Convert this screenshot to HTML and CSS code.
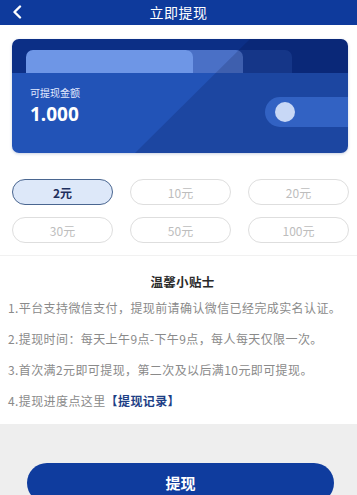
FILE: index.html
```html
<!DOCTYPE html>
<html lang="zh">
<head>
<meta charset="utf-8">
<link rel="stylesheet" href="styles.css">
</head>
<body>
<header class="topbar">
  <svg class="back" viewBox="0 0 12 14" width="12" height="14"><path d="M9 1.5 L3.5 7 L9 12.5" fill="none" stroke="#fff" stroke-width="2.4" stroke-linecap="round" stroke-linejoin="round"/></svg>
  <h1 class="title">立即提现</h1>
</header>

<section class="card">
  <div class="strip">
    <div class="tab tab-light"></div>
    <div class="tab tab-mid"></div>
    <div class="tab tab-dark"></div>
  </div>
  <div class="main">
    <div class="balance">
      <div class="label">可提现金额</div>
      <div class="amount">1.000</div>
    </div>
    <div class="toggle"><span class="knob"></span></div>
  </div>
</section>

<div class="options">
  <div class="opt opt-on">2元</div>
  <div class="opt">10元</div>
  <div class="opt">20元</div>
  <div class="opt">30元</div>
  <div class="opt">50元</div>
  <div class="opt">100元</div>
</div>

<section class="tips">
  <h2 class="tips-title">温馨小贴士</h2>
  <p class="tip">1.平台支持微信支付，提现前请确认微信已经完成实名认证。</p>
  <p class="tip">2.提现时间：每天上午9点-下午9点，每人每天仅限一次。</p>
  <p class="tip">3.首次满2元即可提现，第二次及以后满10元即可提现。</p>
  <p class="tip">4.提现进度点这里<span class="link">【提现记录】</span></p>
</section>

<footer class="bottom">
  <button class="submit">提现</button>
</footer>
</body>
</html>
```
FILE: styles.css
```css
* { box-sizing: border-box; }
html, body { margin: 0; padding: 0; }
body {
  width: 357px;
  height: 495px;
  overflow: hidden;
  background: #fff;
  font-family: "Noto Sans CJK SC", "Noto Sans", sans-serif;
}
.topbar {
  height: 25px;
  background: #0e3a9c;
  display: flex;
  align-items: center;
  justify-content: center;
  position: relative;
}
.back {
  position: absolute;
  left: 11px;
  top: 5px;
}
.title {
  margin: 0;
  font-size: 14px;
  font-weight: 400;
  color: #fff;
  line-height: 25px;
  letter-spacing: 0.5px;
}

.card {
  position: relative;
  margin: 14px 9px 0 12px;
  height: 114px;
  border-radius: 7px;
  overflow: hidden;
  box-shadow: 0 1px 3px rgba(40, 70, 140, 0.25);
}
.card::after {
  content: "";
  position: absolute;
  inset: 0;
  background: rgba(0, 8, 50, 0.16);
  clip-path: polygon(238px 0, 100% 0, 100% 100%, 123px 100%);
  z-index: 1;
  pointer-events: none;
}
.strip {
  position: relative;
  z-index: 0;
  height: 34px;
  background: #0c2f86;
  display: flex;
  align-items: flex-end;
  padding-left: 14px;
}
.tab {
  height: 23px;
  border-radius: 7px 7px 0 0;
  position: relative;
}
.tab-light { width: 167px; background: #6e96e6; z-index: 0; }
.tab-mid { width: 60px; margin-left: -10px; background: #4a70c6; z-index: -1; }
.tab-dark { width: 60px; margin-left: -11px; background: #1a4099; z-index: -2; }

.main {
  height: 80px;
  background: #2253b7;
  display: flex;
  justify-content: space-between;
  align-items: flex-start;
  padding: 13px 0 0 18px;
}
.balance { position: relative; z-index: 2; }
.label {
  font-size: 10px;
  line-height: 14px;
  color: #e2eaff;
  margin-bottom: 2px;
}
.amount {
  font-family: "Noto Sans", "Open Sans", sans-serif;
  font-size: 19px;
  font-weight: 700;
  line-height: 24px;
  color: #fff;
}
.toggle {
  margin-top: 11px;
  width: 83px;
  height: 30px;
  border-radius: 15px 0 0 15px;
  background: #3262c3;
  display: flex;
  align-items: center;
  padding-left: 10px;
  position: relative;
  z-index: 2;
}
.knob {
  width: 20px;
  height: 20px;
  border-radius: 50%;
  background: #c8d8f6;
}

.options {
  display: grid;
  grid-template-columns: repeat(3, 101px);
  column-gap: 17px;
  row-gap: 12px;
  padding: 0 0 0 12px;
  margin-top: 26px;
}
.opt {
  height: 26px;
  border: 1px solid #dedede;
  border-radius: 13px;
  display: flex;
  align-items: center;
  justify-content: center;
  font-size: 12px;
  color: #bdbdbd;
}
.opt-on {
  background: #dde8f9;
  border: 1.5px solid #4a6690;
  color: #1d2f5e;
  font-weight: 700;
}

.tips {
  margin-top: 12px;
  border-top: 1px solid #f1f1f1;
  padding: 16px 0 0 8px;
  height: 169px;
}
.tips-title {
  margin: 0;
  text-align: center;
  font-size: 12.5px;
  font-weight: 700;
  color: #2a2a2a;
  line-height: 20px;
  letter-spacing: 0.3px;
}
.tip {
  margin: 0;
  font-size: 12px;
  line-height: 31px;
  color: #8a8a8a;
  letter-spacing: 0.4px;
  white-space: nowrap;
}
.link {
  color: #1e3f86;
  font-weight: 700;
}

.bottom {
  background: #eeeeee;
  height: 80px;
  padding: 39px 0 0 27px;
}
.submit {
  display: block;
  width: 307px;
  height: 40px;
  border: none;
  border-radius: 20px;
  background: #0f3c9e;
  color: #fff;
  font-family: "Noto Sans CJK SC", sans-serif;
  font-size: 15px;
  font-weight: 700;
  padding: 0;
  line-height: 40px;
}
```
